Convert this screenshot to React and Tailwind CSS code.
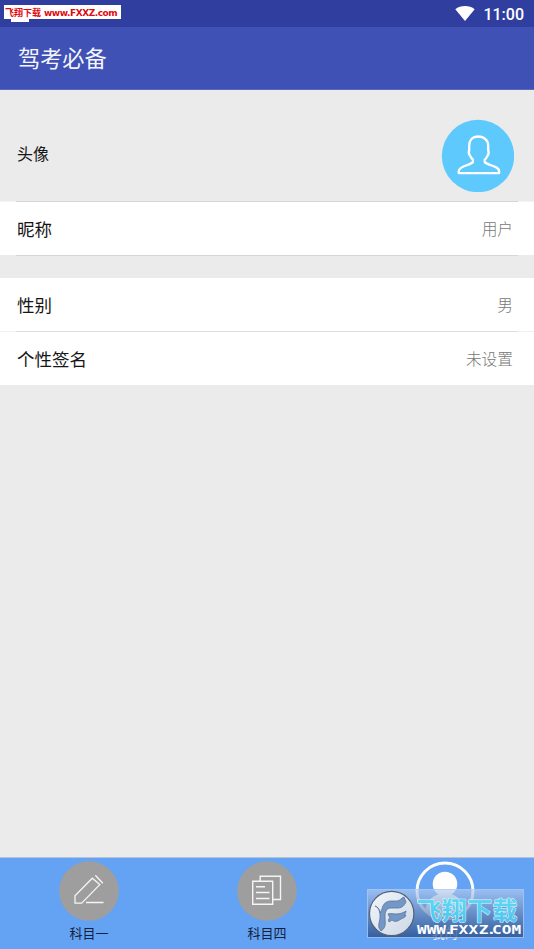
import React from "react";

const AvatarIcon = () => (
  <svg className="block w-[73px] h-[73px]" viewBox="0 0 73 73">
    <circle cx="37" cy="37" r="36.2" fill="#5ec9fd" />
    <path
      d="M37.200 17.500c-5.800 0-9 3.900-9 9.200v4.500c-.9 2.600 0 4.800 1.200 6 .5 1.400 1.200 2.400 2.500 3.400v2.400c-2.500 3.500-14.200 3.800-14.200 9.300v1.800h40.400v-1.800c0-5.500-11.900-5.800-14.400-9.300v-2.400c1.400-1 2-2 2.500-3.400 1.200-1.200 1.900-3.400 1-6v-4.500c0-5.300-4-9.200-10-9.200z"
      fill="none"
      stroke="#fff"
      strokeWidth="2.3"
      strokeLinejoin="round"
    />
  </svg>
);

const PencilIcon = () => (
  <svg className="block w-[60px] h-[60px]" viewBox="0 0 60 60">
    <circle cx="30" cy="30" r="29.8" fill="#9e9e9e" />
    <g fill="none" stroke="#f5f5f5" strokeWidth="1.3">
      <path d="M16 42.200V34.800L33.300 17.200 40.800 23.600 22.700 42.200z" />
      <path d="M36.300 14.200L43.800 22.300M27 41.500H44.500" />
    </g>
  </svg>
);

const PapersIcon = () => (
  <svg className="block w-[60px] h-[60px]" viewBox="0 0 60 60">
    <circle cx="30" cy="30" r="29.8" fill="#9e9e9e" />
    <g fill="none" stroke="#f5f5f5" strokeWidth="1.4">
      <path d="M15.700 20.200H35.700V43.300H15.700z" />
      <path d="M23.200 20.200V15.300H43.500V38.500H35.700M19 25.700H28M19 31.500H32.500M19 37.500H32.500" />
    </g>
  </svg>
);

const MineIcon = () => (
  <svg className="block w-[60px] h-[60px]" viewBox="0 0 60 60">
    <circle cx="30" cy="30" r="28" fill="none" stroke="#fff" strokeWidth="3" />
    <circle cx="30" cy="23" r="12.300" fill="#fff" />
    <path d="M10 50c1-10 8-15 14-17h12c6 2 13 7 14 17-10 10-30 10-40 0z" fill="#fff" />
  </svg>
);

const Row = ({ label, value }) => (
  <div className="flex h-[53px] items-center justify-between bg-white pl-[17px] pr-[21px]">
    <span className="text-[17.500px] leading-[26px] text-[#161616]">{label}</span>
    <span className="text-[15.700px] font-light leading-[24px] text-[#777]">{value}</span>
  </div>
);

const Divider = ({ className, line = "bg-[#d6d6d6]" }) => (
  <div className={`h-px px-[16px] ${className}`}>
    <div className={`h-px ${line}`} />
  </div>
);

const tabs = [
  { label: "科目一", icon: <PencilIcon />, color: "text-[#13213a]" },
  { label: "科目四", icon: <PapersIcon />, color: "text-[#13213a]" },
  { label: "我的", icon: <MineIcon />, color: "text-[#e6f0ff]" },
];

const Watermark = () => (
  <svg
    className="absolute left-[367px] top-[889px] h-[49px] w-[157px]"
    viewBox="0 0 157 49"
    fontFamily="'Noto Sans CJK SC', sans-serif"
  >
    <defs>
      <linearGradient id="plate" x1="0" y1="0" x2="0" y2="1">
        <stop offset="0" stopColor="#b5cdf0" stopOpacity=".65" />
        <stop offset=".5" stopColor="#6785b5" stopOpacity=".7" />
        <stop offset="1" stopColor="#1c3c73" stopOpacity=".66" />
      </linearGradient>
      <linearGradient id="seal" x1="0" y1="0" x2="1" y2="1">
        <stop offset="0" stopColor="#f2f6fb" />
        <stop offset="1" stopColor="#ccd8e6" />
      </linearGradient>
      <linearGradient id="ink" x1="0" y1="0" x2="0" y2="1">
        <stop offset="0" stopColor="#5fe0f5" />
        <stop offset="1" stopColor="#4fc0ef" />
      </linearGradient>
    </defs>
    <rect x=".5" y=".5" width="156" height="48" fill="url(#plate)" stroke="#a9c9f5" strokeOpacity=".8" />
    <circle cx="24.700" cy="24.500" r="22.200" fill="url(#seal)" stroke="#566274" strokeWidth="1.200" />
    <g fill="#7397c6" stroke="#5d7394" strokeWidth=".8" strokeLinejoin="round">
      <path d="M8 17c5 2 5 6 5 11 0 4-2 7-1 11l2 3c6-4 4-9 4-14 0-5 1-8 5-9h8c5 0 7-4 8-6l-2-5c-3 1-4 4-7 4h-6c-5 0-8 3-9 8l-2 4c-1-4-2-6-5-7z" />
      <path d="M21 25c3-1 5 0 8 0 4 0 7-1 10-3 0 2-1 3-2 4h2c-1 3-3 3-5 4-4 3-7 3-9 1l-3 2c-1-2-1-3 1-4z" />
    </g>
    <text
      x="49.500"
      y="30.500"
      textLength="101"
      fill="url(#ink)"
      stroke="#e2f7ff"
      strokeWidth="1"
      strokeLinejoin="round"
      paintOrder="stroke"
      fontWeight="700"
      fontSize="25"
    >
      飞翔下载
    </text>
    <text
      transform="translate(50 45) scale(1.400 1)"
      x="0 6.900 13.800 19.200 22.900 29.600 36.800 44.200 49.700 53.500 60.500 67.500"
      fill="#fff"
      fontFamily="DejaVu Sans Mono, monospace"
      fontWeight="700"
      fontSize="11.500"
    >
      WWW.FXXZ.COM
    </text>
  </svg>
);

export default function App() {
  return (
    <div className="relative flex h-[949px] w-[534px] flex-col overflow-hidden bg-[#ebebeb] font-['Noto_Sans_CJK_SC',sans-serif]">
      {/* Status bar */}
      <div className="flex h-[27px] shrink-0 items-center justify-end bg-[#303f9f] pr-[10px]">
        <svg className="mr-[8px] block h-[16px] w-[20px]" viewBox="0 0 20 16">
          <path d="M.3 3.300C5.500-1.100 14.500-1.100 19.700 3.300L10 15z" fill="#fff" />
        </svg>
        <span className="mt-[2px] font-['Roboto',sans-serif] text-[16px] font-medium leading-[20px] text-white">11:00</span>
      </div>

      {/* App bar */}
      <header className="flex h-[63px] shrink-0 items-center border-b border-[#5968bd] bg-[#3f51b5] pb-[2px] pl-[18px]">
        <h1 className="text-[22.200px] leading-[30px] text-[#f4f5fc]">驾考必备</h1>
      </header>

      <main className="flex-1">
        <div className="flex h-[111px] items-center justify-between pl-[17px] pr-[20px] pt-[20px]">
          <span className="mb-[6px] text-[16px] leading-[24px] text-[#161616]">头像</span>
          <AvatarIcon />
        </div>
        <Divider className="bg-[#f4f4f4]" />
        <Row label="昵称" value="用户" />
        <Divider className="bg-[#ebebeb]" />
        <div className="h-[22px]" />
        <Row label="性别" value="男" />
        <Divider className="bg-[#f0f0f0]" line="bg-[#dedede]" />
        <Row label="个性签名" value="未设置" />
      </main>

      <nav className="grid h-[92px] shrink-0 grid-cols-3 border-t border-[#b4c3d9] bg-[#64a3f4]">
        {tabs.map((tab) => (
          <div key={tab.label} className="flex flex-col items-center pt-[3px]">
            {tab.icon}
            <span className={`mt-[3px] text-[13px] leading-[18px] ${tab.color}`}>{tab.label}</span>
          </div>
        ))}
      </nav>

      {/* Site badges over the screen */}
      <div className="absolute left-[11px] top-[15px] h-[7px] w-[18px] bg-white" />
      <div className="absolute left-[4px] top-[5px] flex h-[14px] w-[117px] items-center whitespace-nowrap bg-white pl-[1px] pt-[2px] text-[#e00a12]">
        <span className="w-[39px] text-[9px] font-bold leading-[12px]">飞翔下载</span>
        <span className="font-['DejaVu_Sans',sans-serif] text-[9px] font-bold leading-[12px] tracking-[-0.45px]">www.FXXZ.com</span>
      </div>
      <Watermark />
    </div>
  );
}
